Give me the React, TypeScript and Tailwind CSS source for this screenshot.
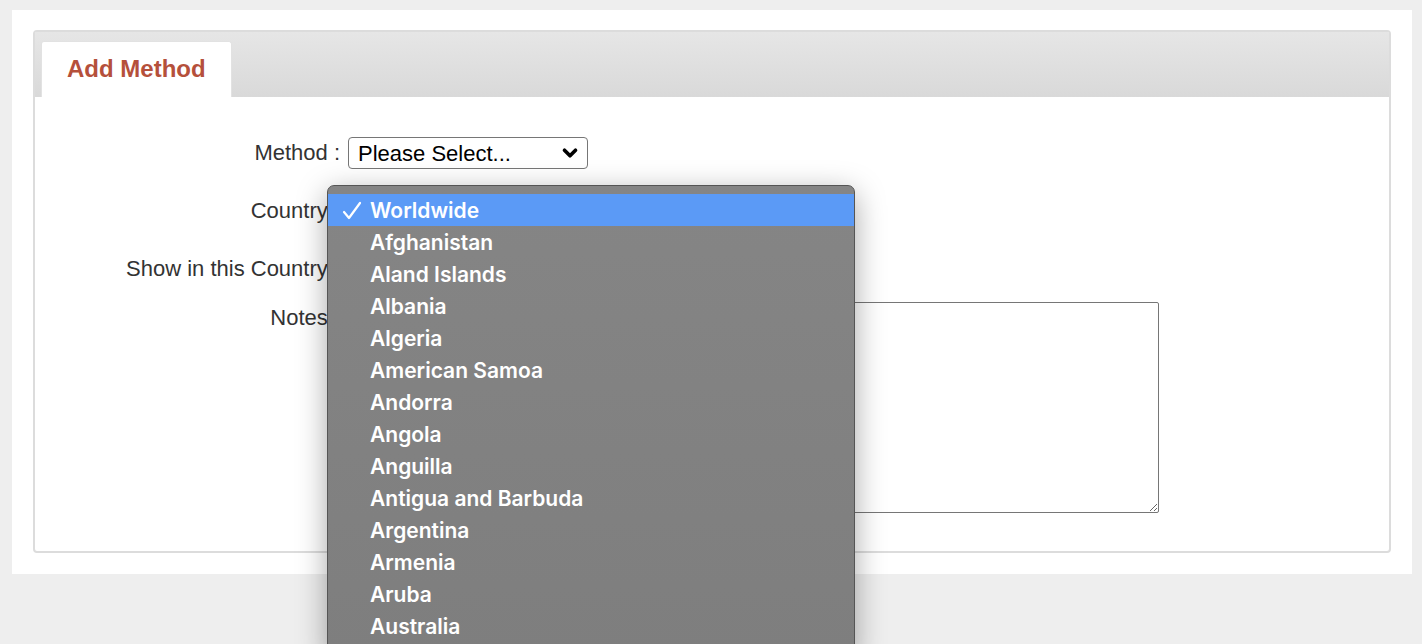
import { ChevronDown } from 'lucide-react'

const countries = [
  'Worldwide',
  'Afghanistan',
  'Aland Islands',
  'Albania',
  'Algeria',
  'American Samoa',
  'Andorra',
  'Angola',
  'Anguilla',
  'Antigua and Barbuda',
  'Argentina',
  'Armenia',
  'Aruba',
  'Australia',
]

function Row({ label, children, className = '' }: { label: string; children?: React.ReactNode; className?: string }) {
  return (
    <div className={`flex items-start ${className}`}>
      <div className="w-[313px] shrink-0 pr-2 text-right text-[22px] leading-[32px] text-[#333]">{label}</div>
      <div className="flex-1">{children}</div>
    </div>
  )
}

export default function App() {
  return (
    <div
      className="relative h-[644px] overflow-hidden bg-[#eeeeee] pt-[10px] pl-[12px]"
      style={{ fontFamily: '"Liberation Sans", Arial, sans-serif' }}
    >
      {/* white page card */}
      <div className="h-[564px] w-[1400px] bg-white px-[21px] pt-[20px]">
        <div className="h-[523px] rounded-[4px] border-2 border-[#dcdcdc] bg-white">
          {/* tab bar */}
          <div className="flex h-[65px] items-end bg-gradient-to-b from-[#e6e6e6] to-[#d9d9d9] px-[6px]">
            <div className="flex h-[56px] items-center rounded-t-[3px] border border-b-0 border-[#e2e2e2] bg-white px-[25px] pb-[2px] text-[24px] font-bold text-[#b5503b]">
              Add Method
            </div>
          </div>

          {/* form */}
          <div className="pt-[40px]">
            <Row label="Method :">
              <div className="flex h-[32px] w-[240px] items-center justify-between rounded-[4px] border border-[#767676] bg-white pl-[9px] pr-[6px] text-[22px] text-black">
                <span>Please Select...</span>
                <ChevronDown className="h-[22px] w-[22px]" strokeWidth={4} />
              </div>
            </Row>
            <Row label="Country :" className="mt-[26px]">
              <div className="h-[32px]" />
            </Row>
            <Row label="Show in this Country :" className="mt-[26px]">
              <div className="h-[32px]" />
            </Row>
            <Row label="Notes :" className="mt-[17px]">
              <textarea className="h-[211px] w-[811px] resize rounded-[2px] border border-[#767676] bg-white outline-none" />
            </Row>
          </div>
        </div>
      </div>

      {/* open country select popup */}
      <div
        className="absolute left-[327px] top-[185px] h-[470px] w-[528px] rounded-t-[7px] border border-[#555] bg-gradient-to-b from-[#858585] to-[#7e7e7e] pt-[8px] shadow-[0_8px_30px_rgba(0,0,0,0.35)]"
        style={{ fontFamily: 'Inter, "Noto Sans", sans-serif' }}
      >
        {countries.map((c, i) => (
          <div
            key={c}
            className={`flex h-[32px] items-center pt-[2px] text-[21px] font-semibold text-white ${i === 0 ? 'bg-[#5b9af6]' : ''}`}
          >
            <span className="flex w-[42px] justify-end pr-[8px]">
              {i === 0 && (
                <svg width="20" height="20" viewBox="0 0 20 20" fill="none" stroke="white" strokeWidth="2.2" strokeLinecap="round" strokeLinejoin="round">
                  <path d="M2 11 L7 17 L18 2" />
                </svg>
              )}
            </span>
            <span>{c}</span>
          </div>
        ))}
      </div>
    </div>
  )
}
